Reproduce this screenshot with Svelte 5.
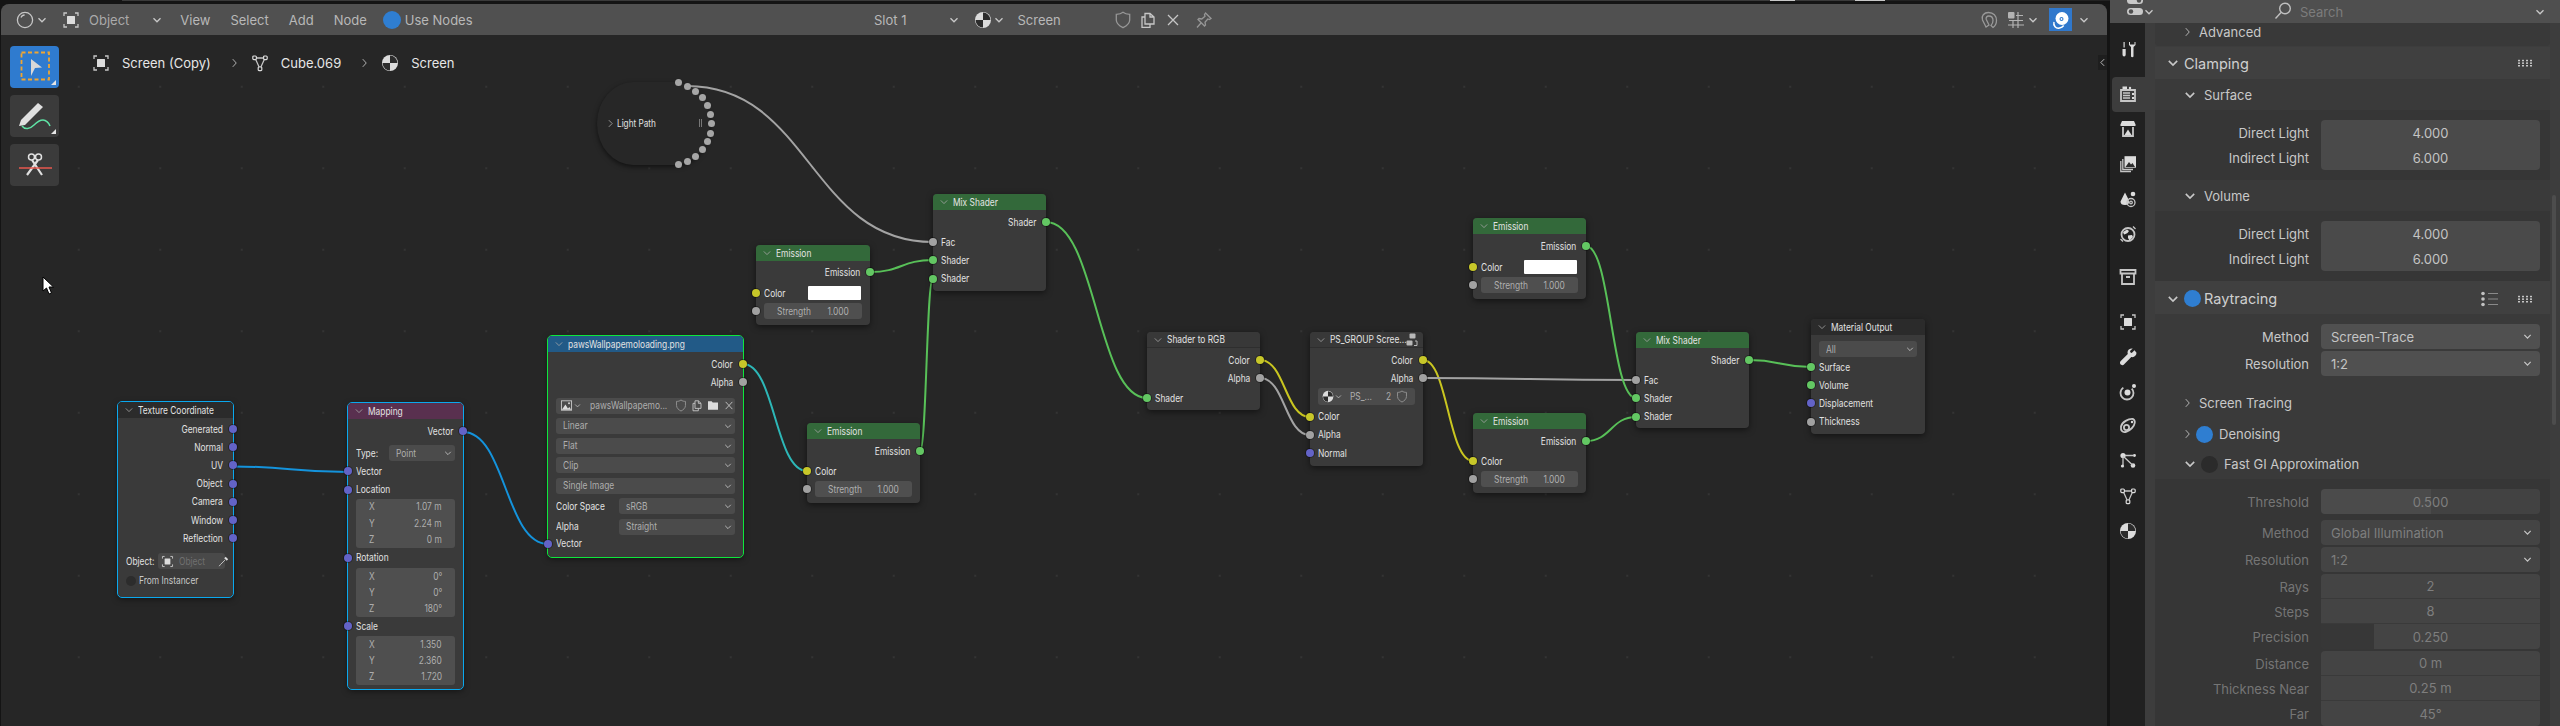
<script>
  const GRAY = '#a1a1a1', YEL = '#c7c729', GRN = '#63c763', PUR = '#6363c7';

  const emissionRows = (swatch, mt0, mt1) => [
    { t: 'out', label: 'Emission', s: GRN, mt: mt0 },
    { t: swatch ? 'swatch' : 'in', label: 'Color', s: YEL, mt: mt1 },
    { t: 'num', label: 'Strength', val: '1.000', s: GRAY }
  ];
  const mixRows = () => [
    { t: 'out', label: 'Shader', s: GRN, mt: 1 },
    { t: 'in', label: 'Fac', s: GRAY, mt: 2 },
    { t: 'in', label: 'Shader', s: GRN },
    { t: 'in', label: 'Shader', s: GRN }
  ];

  const nodes = [
    { title: 'Texture Coordinate', x: 118, y: 402, w: 115, h: 195, head: 'dark', sel: 'blue', rows: [
      { t: 'out', label: 'Generated', s: PUR }, { t: 'out', label: 'Normal', s: PUR }, { t: 'out', label: 'UV', s: PUR },
      { t: 'out', label: 'Object', s: PUR }, { t: 'out', label: 'Camera', s: PUR }, { t: 'out', label: 'Window', s: PUR },
      { t: 'out', label: 'Reflection', s: PUR },
      { t: 'object', mt: 5.500 }, { t: 'check', label: 'From Instancer', mt: 2.500 }
    ] },
    { title: 'Mapping', x: 348, y: 403, w: 115, h: 286, head: 'purple', sel: 'blue', rows: [
      { t: 'out', label: 'Vector', s: PUR, mt: 1 },
      { t: 'type', mt: 4 },
      { t: 'in', label: 'Vector', s: PUR }, { t: 'in', label: 'Location', s: PUR },
      { t: 'vec', vals: ['1.07 m', '2.24 m', '0 m'] },
      { t: 'in', label: 'Rotation', s: PUR, mt: 1 },
      { t: 'vec', vals: ['0°', '0°', '180°'], mt: 1 },
      { t: 'in', label: 'Scale', s: PUR },
      { t: 'vec', vals: ['1.350', '2.360', '1.720'], mt: 1 }
    ] },
    { title: 'pawsWallpapemoloading.png', x: 548, y: 336, w: 195, h: 221, head: 'blue', sel: 'green', rows: [
      { t: 'out', label: 'Color', s: YEL, mt: 1 }, { t: 'out', label: 'Alpha', s: GRAY },
      { t: 'image', mt: 6 },
      { t: 'sel', val: 'Linear', mt: 3.500 }, { t: 'sel', val: 'Flat', mt: 3.500 }, { t: 'sel', val: 'Clip', mt: 3 }, { t: 'sel', val: 'Single Image', mt: 4 },
      { t: 'sel', label: 'Color Space', val: 'sRGB', mt: 4 }, { t: 'sel', label: 'Alpha', val: 'Straight', mt: 4 },
      { t: 'in', label: 'Vector', s: PUR }
    ] },
    { title: 'Emission', x: 756, y: 245, w: 114, h: 80, head: 'green', rows: emissionRows(true, 0, 3) },
    { title: 'Emission', x: 807, y: 423, w: 113, h: 80, head: 'green', rows: emissionRows(false, 1, 2) },
    { title: 'Mix Shader', x: 933, y: 194, w: 113, h: 97, head: 'green', rows: mixRows() },
    { title: 'Shader to RGB', x: 1147, y: 332, w: 113, h: 78, head: 'gray', rows: [
      { t: 'out', label: 'Color', s: YEL, mt: 1 }, { t: 'out', label: 'Alpha', s: GRAY },
      { t: 'in', label: 'Shader', s: GRN, mt: 2 }
    ] },
    { title: 'PS_GROUP Scree...', x: 1310, y: 332, w: 113, h: 134, head: 'gray', group: true, rows: [
      { t: 'out', label: 'Color', s: YEL, mt: 1 }, { t: 'out', label: 'Alpha', s: GRAY },
      { t: 'group' },
      { t: 'in', label: 'Color', s: YEL, mt: 2 }, { t: 'in', label: 'Alpha', s: GRAY }, { t: 'in', label: 'Normal', s: PUR }
    ] },
    { title: 'Emission', x: 1473, y: 218, w: 113, h: 81, head: 'green', rows: emissionRows(true, 1, 3) },
    { title: 'Emission', x: 1473, y: 413, w: 113, h: 80, head: 'green', rows: emissionRows(false, 1, 2) },
    { title: 'Mix Shader', x: 1636, y: 332, w: 113, h: 96, head: 'green', rows: mixRows() },
    { title: 'Material Output', x: 1811, y: 319, w: 114, h: 115, head: 'dark', rows: [
      { t: 'sel', val: 'All', mt: 4 },
      { t: 'in', label: 'Surface', s: GRN, mt: 0.500 }, { t: 'in', label: 'Volume', s: GRN },
      { t: 'in', label: 'Displacement', s: PUR }, { t: 'in', label: 'Thickness', s: GRAY }
    ] }
  ];

  const BLUE = '#1493dc', TEAL = '#2db7b7', WG = '#58c058', WY = '#c9c620', WGR = '#a3a3a3';
  const wires = [
    [233, 466.500, 348, 472, BLUE], [463, 432, 548, 544, BLUE], [743, 364, 807, 471, TEAL],
    [920, 451, 933, 278, WG], [870, 272, 933, 260, WG], [687, 86, 933, 242, WGR],
    [1046, 222, 1147, 398, WG], [1260, 360, 1310, 417, WY], [1260, 378, 1310, 435, WGR],
    [1423, 360, 1473, 461, WY], [1423, 378, 1636, 380, WGR], [1586, 246, 1636, 398, WG],
    [1586, 441, 1636, 417, WG], [1749, 360, 1811, 367, WG]
  ];
  const wirePath = ([x1, y1, x2, y2]) => {
    const k = (x2 - x1) * 0.5;
    return `M${x1} ${y1}C${x1 + k} ${y1} ${x2 - k} ${y2} ${x2} ${y2}`;
  };

  // collapsed Light Path sockets, page coordinates
  const lightSockets = [
    [678, 82], [687, 86], [695, 91], [702, 97], [707, 105], [710, 114], [711, 123],
    [710, 133], [707, 141], [702, 149], [695, 156], [687, 161], [678, 164]
  ];

  const tabs = [
    { n: 'tool', mt: 0 }, { n: 'render', mt: 9, active: true }, { n: 'output', mt: 0 }, { n: 'viewlayer', mt: 0 },
    { n: 'scene', mt: 0 }, { n: 'world', mt: 1 }, { n: 'collection', mt: 8 }, { n: 'object', mt: 10 },
    { n: 'modifier', mt: 0 }, { n: 'particles', mt: 0 }, { n: 'physics', mt: 0 }, { n: 'constraint', mt: 0 },
    { n: 'mesh', mt: 0 }, { n: 'material', mt: 0 }
  ];
</script>

{#snippet chev(cls = '')}
  <svg class="chev {cls}" viewBox="0 0 10 10"><path d="M1.500 3.200 5 6.800 8.500 3.200" /></svg>
{/snippet}

{#snippet chevR()}
  <svg class="chevr" viewBox="0 0 10 14"><path d="M2.500 1.500 7.500 7 2.500 12.500" /></svg>
{/snippet}

{#snippet dots()}
  <svg class="dots" viewBox="0 0 16 8">
    {#each [0, 1, 2, 3] as i}
      {#each [0, 1, 2] as j}
        <rect x={1 + i * 4} y={0.800 + j * 2.600} width="2" height="1.500" />
      {/each}
    {/each}
  </svg>
{/snippet}

{#snippet ico(n)}
  <svg class="ico" viewBox="0 0 18 18" preserveAspectRatio="none">
    {#if n === 'object'}
      <path class="ln" d="M5 2H2v3M13 2h3v3M5 16H2v-3M13 16h3v-3" />
      <rect class="fl" x="5" y="5" width="8" height="8" rx="0.500" />
    {:else if n === 'mesh'}
      <path class="ln" d="M4 4h10L9 15Z" />
      <rect class="bx" x="1.800" y="2" width="3.600" height="3.600" rx="1" />
      <rect class="bx" x="12.600" y="2" width="3.600" height="3.600" rx="1" />
      <rect class="bx" x="7.200" y="13" width="3.600" height="3.600" rx="0.800" />
    {:else if n === 'material'}
      <circle class="fl" cx="9" cy="9" r="8" />
      <path class="cut" d="M9 9V1.600A7.400 7.400 0 0 1 16.400 9Z" />
      <path class="cut" d="M9 9H1.600A7.400 7.400 0 0 0 9 16.400Z" />
    {:else if n === 'nodeedit'}
      <circle class="ln" cx="9" cy="9" r="7.600" />
      <path class="ln" d="M5 6.500C5.600 5 7 4 8.600 4" />
    {:else if n === 'shield'}
      <path class="ln dim" d="M9 1.300C7 3 4.500 3.300 2.300 3.300V9C2.300 12.500 5.500 15 9 16.700 12.500 15 15.700 12.500 15.700 9V3.300C13.500 3.300 11 3 9 1.300Z" />
    {:else if n === 'copy'}
      <path class="ln" d="M6 2.500H11L15 6V13H6ZM11 2.500V6H15" />
      <path class="ln" d="M6 6H3V16.300H11V13" />
    {:else if n === 'x'}
      <path class="ln" d="M4 4 14 14M14 4 4 14" />
    {:else if n === 'pin'}
      <path class="ln dim" d="M10.500 2 16 7.500 14.500 8.500 12.800 8 10 11.200 10.500 14 9.500 15 3 8.500 4 7.500 6.800 8 10 5.200 9.500 3.500ZM6 12 2 16.500" />
    {:else if n === 'folder'}
      <path class="fl" d="M1.500 3H7l1.500 2H16.500V15H1.500Z" />
    {:else if n === 'imagef'}
      <rect class="ln" x="2" y="2.500" width="14" height="13" />
      <path class="fl" d="M2.500 15 7.500 7.500 11 13 13 11 15.500 15Z" />
      <circle class="fl" cx="12.500" cy="5.800" r="1.300" />
    {:else if n === 'picker'}
      <path class="fl" d="M12 2.500 15.500 6 13.500 8 10 4.500Z" />
      <path class="ln" d="M11 7 4.500 13.500 3 15.500" />
    {:else if n === 'tool'}
      <path class="fl" d="M3.500 8h3.200v5.500a1.600 2 0 0 1-3.200 0ZM4.500 1h1.200v5.500H4.500Z" />
      <path class="fl" d="M10 1v3l2 2v9.500a1.500 1.500 0 0 0 2.500 0V6l2-2V1l-1 0v2.500h-4.500V1Z" />
    {:else if n === 'render'}
      <path class="ln thick" d="M2 5H16V16H2Z" />
      <path class="fl" d="M3.500 1.500H8V4H3.500Z" />
      <circle class="fl" cx="11" cy="3" r="1.200" />
      <path class="ln" d="M4 8H11M4 10.500H11M4 13H11" />
      <rect class="fl" x="13" y="8" width="2" height="2" /><rect class="fl" x="13" y="12" width="2" height="2" />
    {:else if n === 'output'}
      <path class="fl" d="M3 1H15L16.500 4.500V6H1.500V4.500Z" />
      <path class="ln thick" d="M4 7V16H14V7" />
      <path class="fl" d="M5.500 15 9 9.500 12.500 15Z" />
    {:else if n === 'viewlayer'}
      <path class="ln" d="M1.800 6V16.500H12" />
      <path class="ln" d="M3.800 4V14.500H14" />
      <rect class="fl" x="5.500" y="1.200" width="11.500" height="11.500" />
      <path class="cut" d="M6.500 12 10 7 12 9.500 13.500 8 16 12Z" />
    {:else if n === 'scene'}
      <path class="fl" d="M6 2.500 1.500 11.500C1.500 14 3 15 6 15 9 15 10 14 10 12 10 9 7.500 6 6 2.500Z" />
      <circle class="fl" cx="14" cy="4" r="2.300" />
      <circle class="ln" cx="12" cy="12.500" r="4" />
      <circle class="ln" cx="12" cy="12.500" r="1.300" />
    {:else if n === 'world'}
      <circle class="ln thick" cx="9" cy="9.500" r="6.500" />
      <path class="fl" d="M4 7 8 4.500 10 6 8.500 8 6.500 9 5 9.500ZM9 10.500 13 10 14 12 10.500 15.500 9 13Z" />
      <path class="ln" d="M14 1.500 16.500 4M1.500 14 4 16.500" />
    {:else if n === 'collection'}
      <path class="ln thick" d="M1.500 2H16.500V5.500H1.500ZM3 5.500V16H15V5.500M7 9H11" />
    {:else if n === 'modifier'}
      <path class="fl" d="M15.500 2.200 12.700 5 11.500 4.500 11 3 13.700 .5C11 .2 8.500 1.800 8.500 4.500L8.800 6 1.500 13.200C.5 14.500 1 16 2.200 16.800 3.400 17.500 4.500 17 5.200 16.200L12.300 9C15 9.800 17.500 7.500 17.500 4.800Z" />
    {:else if n === 'particles'}
      <circle class="ln thick" cx="8" cy="10" r="6.500" stroke-dasharray="26 9" />
      <circle class="fl" cx="8.500" cy="9.500" r="3" />
      <circle class="fl" cx="15" cy="3" r="2" />
    {:else if n === 'physics'}
      <path class="ln thick" d="M2 9.500C3 5 9.500 1.500 14 2 17 3.500 16 8 13 11 10 14 5 16.500 3 14 2 13 1.800 11 2 9.500Z" />
      <circle class="ln thick" cx="7.500" cy="10.500" r="2.600" />
      <circle class="fl" cx="13" cy="5" r="1.200" />
    {:else if n === 'constraint'}
      <circle class="fl" cx="4" cy="3.500" r="2.600" />
      <circle class="fl" cx="14" cy="13.500" r="2.300" />
      <circle class="fl" cx="3.500" cy="14" r="1.600" />
      <circle class="fl" cx="15.500" cy="3.500" r="1.400" />
      <path class="ln" d="M4 4 14 13.500M4 5V13M6 3.500H15" />
    {/if}
  </svg>
{/snippet}

<div class="app">
  <div class="strip"></div>

  <div class="main">
    <section class="editor">
      <header class="hdr">
        <div class="hgroup left">
          <span class="i18">{@render ico('nodeedit')}</span>
          <span class="m3">{@render chev()}</span>
          <span class="i18 m15">{@render ico('object')}</span>
          <span class="hlabel m9">Object</span>
          <span class="m23">{@render chev()}</span>
          <span class="m18">View</span>
          <span class="m20">Select</span>
          <span class="m20">Add</span>
          <span class="m20">Node</span>
          <span class="toggle m16"></span>
          <span class="m4">Use Nodes</span>
        </div>
        <div class="hgroup mid">
          <span>Slot 1</span>
          <span class="m43">{@render chev()}</span>
          <span class="i18 m15">{@render ico('material')}</span>
          <span class="m2">{@render chev()}</span>
          <span class="m13">Screen</span>
          <span class="i18 m53">{@render ico('shield')}</span>
          <span class="i18 m7">{@render ico('copy')}</span>
          <span class="i18 m7">{@render ico('x')}</span>
          <span class="i18 m13">{@render ico('pin')}</span>
        </div>
        <div class="hgroup right">
          <svg class="magnet" viewBox="0 0 18 18"><path d="M6 16 2.500 9C1 5 4 1.500 8.500 1.500 13.500 1.500 16.500 5 16.500 9.500 16.500 12 15 15 13 16.500L11 14.500C12.500 13 13 11 13 9.500 13 6.500 11 5 8.800 5 7 5 5.500 6.500 6.300 8.500L9 14Z" /></svg>
          <svg class="snap m9" viewBox="0 0 18 18">
            <rect x="1" y="1" width="6.500" height="6.500" rx="1" />
            <path d="M11 1V17M16 9.500H2M6 9V17M1 14H17M16 4.500H9" />
          </svg>
          <span class="m3">{@render chev()}</span>
          <span class="overlay-btn m11">
            <svg viewBox="0 0 20 20">
              <circle cx="11" cy="8.500" r="6.500" fill="#fff" />
              <circle cx="10.500" cy="9" r="2" fill="#3078cc" />
              <circle cx="10.500" cy="9" r="0.900" fill="#fff" />
              <path d="M3 12C2 15.500 5 19 8.500 18 11 17.500 12 16.500 12.700 15.500" fill="none" stroke="#fff" stroke-width="1.500" />
            </svg>
          </span>
          <span class="m7">{@render chev()}</span>
        </div>
      </header>

      <div class="canvas">
        <div class="plane">
          <svg class="wires" width="2107" height="726">
            {#each wires as w}
              <path d={wirePath(w)} stroke={w[4]} />
            {/each}
          </svg>

          <div class="lightpath">
            <svg class="lp-chev" viewBox="0 0 6 10"><path d="M1 1 5 5 1 9" /></svg>
            <span class="lp-label">Light Path</span>
            <span class="lp-pause"></span>
          </div>
          {#each lightSockets as p}
            <span class="lp-sock" style="left:{p[0] - 3.500}px;top:{p[1] - 3.500}px"></span>
          {/each}

          {#each nodes as n}
            <div class="node {n.sel ? 'sel-' + n.sel : ''}" style="left:{n.x}px;top:{n.y}px;width:{n.w}px;height:{n.h}px">
              <div class="nhead {n.head}">
                <svg class="nchev" viewBox="0 0 10 10"><path d="M1 3 5 7 9 3" /></svg>
                <span class="nt tl">{n.title}</span>
                {#if n.group}
                  <svg class="groupico" viewBox="0 0 14 14">
                    <rect x="3.500" y="0.500" width="6" height="5" rx="1" />
                    <rect x="0.500" y="7.500" width="6" height="5" rx="1" />
                    <path class="gl" d="M9 8H11V12.500H8" />
                  </svg>
                {/if}
              </div>
              <div class="nbody">
                {#each n.rows as r}
                  <div class="row" style={r.mt ? `margin-top:${r.mt}px` : ''}>
                    {#if r.t === 'out'}
                      <div class="r-out"><span class="nt tr">{r.label}</span><i class="sock so" style="background:{r.s}"></i></div>
                    {:else if r.t === 'in'}
                      <div class="r-in"><i class="sock si" style="background:{r.s}"></i><span class="nt tl">{r.label}</span></div>
                    {:else if r.t === 'swatch'}
                      <div class="r-in between"><i class="sock si" style="background:{r.s}"></i><span class="nt tl">{r.label}</span><b class="swatch"></b></div>
                    {:else if r.t === 'num'}
                      <div class="r-in"><i class="sock si" style="background:{r.s}"></i>
                        <div class="fld numf"><span class="nt tl dimt">{r.label}</span><span class="nt tr dimt">{r.val}</span></div>
                      </div>
                    {:else if r.t === 'sel'}
                      <div class="r-in compact">
                        {#if r.label}<span class="nt tl sellabel">{r.label}</span>{/if}
                        <div class="fld self"><span class="nt tl dimt">{r.val}</span><svg class="nchev2" viewBox="0 0 10 10"><path d="M1.500 3.500 5 7 8.500 3.500" /></svg></div>
                      </div>
                    {:else if r.t === 'type'}
                      <div class="r-in"><span class="nt tl typelabel">Type:</span>
                        <div class="fld self"><span class="nt tl dimt">Point</span><svg class="nchev2" viewBox="0 0 10 10"><path d="M1.500 3.500 5 7 8.500 3.500" /></svg></div>
                      </div>
                    {:else if r.t === 'object'}
                      <div class="r-in compact"><span class="nt tl objlabel">Object:</span>
                        <div class="fld objf"><span class="i14">{@render ico('object')}</span><span class="nt tl faint">Object</span><span class="i14 push">{@render ico('picker')}</span></div>
                      </div>
                    {:else if r.t === 'check'}
                      <div class="r-in"><b class="check"></b><span class="nt tl cl">{r.label}</span></div>
                    {:else if r.t === 'image'}
                      <div class="r-in compact">
                        <div class="fld imgf">
                          <span class="i14">{@render ico('imagef')}</span>
                          <svg class="nchev2 tiny" viewBox="0 0 10 10"><path d="M1.500 3.500 5 7 8.500 3.500" /></svg>
                          <span class="nt tl dimt imgname">pawsWallpapemo...</span>
                          <span class="i12 dimi">{@render ico('shield')}</span>
                          <span class="i12 dimi">{@render ico('copy')}</span>
                          <span class="i12 dimi">{@render ico('folder')}</span>
                          <span class="i12 dimi">{@render ico('x')}</span>
                        </div>
                      </div>
                    {:else if r.t === 'group'}
                      <div class="r-in">
                        <div class="fld grpf">
                          <span class="i12">{@render ico('material')}</span>
                          <svg class="nchev2 tiny" viewBox="0 0 10 10"><path d="M1.500 3.500 5 7 8.500 3.500" /></svg>
                          <span class="nt tl dimt grpname">PS_...</span>
                          <span class="nt tl dimt">2</span>
                          <span class="i12 dimi push">{@render ico('shield')}</span>
                        </div>
                      </div>
                    {/if}
                  </div>
                  {#if r.t === 'vec'}
                    <div class="vec" style={r.mt ? `margin-top:${r.mt}px` : ''}>
                      {#each ['X', 'Y', 'Z'] as axis, i}
                        <div class="vrow"><span class="nt tl dimt">{axis}</span><span class="nt tr dimt">{r.vals[i]}</span></div>
                      {/each}
                    </div>
                  {/if}
                {/each}
              </div>
            </div>
          {/each}
        </div>

        <div class="tools">
          <div class="tool active">
            <svg viewBox="0 0 49 42" width="49" height="42">
              <rect x="11.500" y="6.500" width="27.500" height="27" class="dash" />
              <path d="M21 13 32 21.500 25 22 21 30Z" fill="#d8d8d8" />
            </svg>
            <i class="corner"></i>
          </div>
          <div class="tool">
            <svg viewBox="0 0 49 42" width="49" height="42">
              <path d="M28 8 33 12 15 30 9 31 11 25Z" fill="#e0e0e0" />
              <path d="M12 31C15 35 20 34 24 30 27 27 30 25 33 25 36 25 39 28 40 31" fill="none" stroke="#5fe3a5" stroke-width="1.500" />
            </svg>
            <i class="corner"></i>
          </div>
          <div class="tool">
            <svg viewBox="0 0 49 42" width="49" height="42">
              <circle cx="21.500" cy="13" r="3" class="sc" /><circle cx="28.500" cy="13" r="3" class="sc" />
              <path d="M28 16 17 31M22 16 32 31" stroke="#e0e0e0" stroke-width="2.200" fill="none" />
              <path d="M9 24H42" stroke="#e8584f" stroke-width="1.500" />
            </svg>
          </div>
        </div>

        <div class="crumbs">
          <span class="i18">{@render ico('object')}</span>
          <span class="m12">Screen (Copy)</span>
          <span class="m20">{@render chevR()}</span>
          <span class="i18 m13">{@render ico('mesh')}</span>
          <span class="m12">Cube.069</span>
          <span class="m20">{@render chevR()}</span>
          <span class="i18 m13">{@render ico('material')}</span>
          <span class="m12">Screen</span>
        </div>

        <svg class="cursor" viewBox="0 0 12 20" width="12" height="20">
          <path d="M1 1V15L4.500 12 7 18 9.500 17 7 11H11.500Z" fill="#fff" stroke="#000" stroke-width="1" />
        </svg>

        <div class="collapse"><svg viewBox="0 0 6 10"><path d="M5 1 1 5 5 9" /></svg></div>
      </div>
    </section>

    <aside class="props">
      <header class="phdr">
        <svg class="pref" viewBox="0 0 18 18">
          <rect x="1" y="-3" width="16" height="7" rx="3.500" />
          <circle cx="13" cy="0.500" r="2.200" class="hole" />
          <rect x="1" y="8" width="16" height="7" rx="3.500" />
          <circle cx="5" cy="11.500" r="2.200" class="hole" />
        </svg>
        {@render chev()}
        <svg class="search" viewBox="0 0 18 18"><circle cx="11" cy="6.500" r="5.300" /><path d="M7 10.500 1.500 16.500" /></svg>
        <span class="stext">Search</span>
        <span class="push">{@render chev()}</span>
      </header>

      <div class="pbody">
        <nav class="tabs">
          {#each tabs as t}
            <div class="tab" class:on={t.active} style={t.mt ? `margin-top:${t.mt}px` : ''}>
              <span class="i18 tabi">{@render ico(t.n)}</span>
            </div>
          {/each}
        </nav>

        <div class="content">
          <div class="sbhead adv">{@render chevR()}<span>Advanced</span></div>

          <div class="phead">{@render chev('big')}<span class="ptitle">Clamping</span><span class="push">{@render dots()}</span></div>

          <div class="sbhead">{@render chev('big')}<span>Surface</span></div>
          <div class="sbbody">
            <div class="pr"><label>Direct Light</label><div class="pf num top"><span>4.000</span></div></div>
            <div class="pr"><label>Indirect Light</label><div class="pf num bot"><span>6.000</span></div></div>
          </div>

          <div class="sbhead">{@render chev('big')}<span>Volume</span></div>
          <div class="sbbody">
            <div class="pr"><label>Direct Light</label><div class="pf num top"><span>4.000</span></div></div>
            <div class="pr"><label>Indirect Light</label><div class="pf num bot"><span>6.000</span></div></div>
          </div>

          <div class="phead gap2">{@render chev('big')}<span class="tg"></span><span class="ptitle">Raytracing</span>
            <span class="push presets">
              <svg viewBox="0 0 18 16" width="18" height="16"><circle cx="3" cy="2.500" r="1.800" /><circle cx="3" cy="8" r="1.800" /><circle cx="3" cy="13.500" r="1.800" /><path d="M8 2.500H18M8 8H18M8 13.500H18" /></svg>
            </span>
            {@render dots()}
          </div>

          <div class="rt">
            <div class="pr"><label>Method</label><div class="pf drop rnd"><span>Screen-Trace</span>{@render chev('drop')}</div></div>
            <div class="pr mt2"><label>Resolution</label><div class="pf drop rnd"><span>1:2</span>{@render chev('drop')}</div></div>
            <div class="subrow st">{@render chevR()}<span>Screen Tracing</span></div>
            <div class="subrow">{@render chevR()}<span class="tg small"></span><span>Denoising</span></div>
            <div class="subrow fg">{@render chev('big')}<span class="tg small off"></span><span>Fast GI Approximation</span></div>
          </div>

          <div class="fast">
            <div class="pr dis"><label>Threshold</label><div class="pf num rnd slider half"><span>0.500</span></div></div>
            <div class="pr dis mt6"><label>Method</label><div class="pf drop rnd"><span>Global Illumination</span>{@render chev('drop')}</div></div>
            <div class="pr dis mt2"><label>Resolution</label><div class="pf drop rnd"><span>1:2</span>{@render chev('drop')}</div></div>
            <div class="pr dis mt2"><label>Rays</label><div class="pf num top line"><span>2</span></div></div>
            <div class="pr dis"><label>Steps</label><div class="pf num mid line"><span>8</span></div></div>
            <div class="pr dis"><label>Precision</label><div class="pf num bot slider quarter"><span>0.250</span></div></div>
            <div class="pr dis mt2"><label>Distance</label><div class="pf num top line"><span>0 m</span></div></div>
            <div class="pr dis"><label>Thickness Near</label><div class="pf num mid line"><span>0.25 m</span></div></div>
            <div class="pr dis"><label>Far</label><div class="pf num bot"><span>45°</span></div></div>
          </div>
        </div>
        <div class="scrollbar"></div>
      </div>
    </aside>
  </div>
</div>

<style>
  :global(body) { margin: 0; background: #111; }
  .app { width: 2560px; height: 726px; overflow: hidden; font-family: Inter, "Liberation Sans", sans-serif; color: #c4c4c4; background: #141414; position: relative; }
  .strip { height: 4px; background: linear-gradient(90deg, #141414 122px, #3a3a3a 122px, #3a3a3a 1770px, #c8c8c8 1770px, #c8c8c8 1795px, #3a3a3a 1795px, #3a3a3a 1855px, #c8c8c8 1855px, #c8c8c8 1885px, #222 1885px) top left / 100% 1px no-repeat, #141414; }
  .main { display: flex; height: 722px; }

  .m2 { margin-left: 2px; } .m3 { margin-left: 3px; } .m4 { margin-left: 4px; } .m7 { margin-left: 7px; }
  .m9 { margin-left: 9px; } .m11 { margin-left: 11px; } .m12 { margin-left: 12px; } .m13 { margin-left: 13px; }
  .m15 { margin-left: 15px; } .m16 { margin-left: 16px; } .m18 { margin-left: 18px; } .m20 { margin-left: 20px; }
  .m23 { margin-left: 23px; } .m43 { margin-left: 43px; } .m53 { margin-left: 53px; }
  .mt2 { margin-top: 2px; } .mt6 { margin-top: 6px; }
  .push { margin-left: auto; }

  /* left editor */
  .editor { width: 2106px; margin-left: 1px; display: flex; flex-direction: column; border-radius: 8px 8px 0 0; overflow: hidden; background: #262626; }
  .hdr { height: 31px; background: #505050; display: flex; align-items: center; font-size: 13px; color: #b8b8b8; position: relative; flex: none; }
  .hgroup { display: flex; align-items: center; height: 100%; flex: none; }
  .hgroup.left { padding-left: 15px; width: 860px; box-sizing: border-box; }
  .hgroup.mid { width: 1000px; padding-left: 13px; box-sizing: border-box; }
  .hgroup.right { padding-left: 119px; }
  .i18 { display: inline-flex; width: 18px; height: 18px; flex: none; }
  .hlabel { color: #aaa; }
  .toggle { width: 18px; height: 18px; border-radius: 50%; background: #2f7ed1; flex: none; }
  .chev { width: 10px; height: 10px; flex: none; display: block; }
  .chev path { fill: none; stroke: #c8c8c8; stroke-width: 1.300; }
  .magnet { width: 18px; height: 18px; }
  .magnet path { fill: none; stroke: #999; stroke-width: 1.300; }
  .snap { width: 18px; height: 18px; }
  .snap rect { fill: #b3b3b3; }
  .snap path { stroke: #b3b3b3; stroke-width: 1.200; fill: none; }
  .overlay-btn { width: 23px; height: 23px; background: #3078cc; display: inline-flex; align-items: center; justify-content: center; }
  .overlay-btn svg { width: 20px; height: 20px; }

  .ico { display: block; width: 100%; height: 100%; overflow: visible; }
  .ico .ln { fill: none; stroke: #c6c6c6; stroke-width: 1.300; }
  .ico .thick { stroke-width: 1.800; }
  .ico .dim { stroke: #969696; }
  .ico .fl { fill: #dcdcdc; }
  .ico .bx { fill: #262626; stroke: #dcdcdc; stroke-width: 1.200; }
  .ico .cut { fill: #2c2c2c; }

  .canvas { flex: 1; position: relative; overflow: hidden; background-color: #262626; background-image: radial-gradient(circle, #343434 0.800px, transparent 1.200px); background-size: 81.500px 81.500px; background-position: 37px 11px; }
  .plane { position: absolute; left: -1px; top: -35px; width: 2107px; height: 726px; }
  .wires { position: absolute; left: 0; top: 0; }
  .wires path { fill: none; stroke-width: 2; }

  .lightpath { position: absolute; left: 597px; top: 82px; width: 113px; height: 83px; background: #272727; border-radius: 36px / 41.500px; box-shadow: 0 2px 5px rgba(0, 0, 0, .55); display: flex; align-items: center; padding-left: 11px; box-sizing: border-box; font-size: 10.500px; color: #e4e4e4; }
  .lp-chev { width: 5px; height: 9px; margin-right: 4px; }
  .lp-chev path { fill: none; stroke: #aaa; stroke-width: 1; }
  .lp-label { white-space: nowrap; display: inline-block; transform: scaleX(.78); transform-origin: left; }
  .lp-pause { position: absolute; left: 102px; top: 37px; width: 1px; height: 8px; border-left: 1.500px solid #777; border-right: 1.500px solid #777; }
  .lp-sock { position: absolute; width: 7px; height: 7px; border-radius: 50%; background: #a6a6a6; }

  .node { position: absolute; background: #3a3a3a; border-radius: 4px; box-shadow: 0 2px 6px rgba(0, 0, 0, .5); display: flex; flex-direction: column; font-size: 10.500px; color: #e2e2e2; }
  .sel-blue { outline: 1px solid #0aa8ee; }
  .sel-green { outline: 1px solid #0ee63c; }
  .nhead { height: 16px; flex: none; display: flex; align-items: center; border-radius: 4px 4px 0 0; padding-left: 7px; gap: 5px; position: relative; color: #e4e4e4; }
  .nhead.green { background: #33693a; }
  .nhead.blue { background: #225a87; }
  .nhead.purple { background: #59304f; }
  .nhead.dark { background: #2b2b2b; }
  .nhead.gray { background: #383838; border-bottom: 1px solid #2e2e2e; box-sizing: border-box; }
  .nchev { width: 8px; height: 8px; flex: none; }
  .nchev path { fill: none; stroke: #a8a8a8; stroke-width: 1; }
  .groupico { position: absolute; right: 3px; top: 1px; width: 14px; height: 14px; }
  .groupico rect { fill: #b8b8b8; }
  .groupico .gl { fill: none; stroke: #b8b8b8; stroke-width: 1; }
  .nbody { padding-top: 2px; display: flex; flex-direction: column; }
  .row { flex: none; }
  .row:empty { display: none; }
  .r-out, .r-in { height: 18.200px; position: relative; display: flex; align-items: center; padding: 0 8px; }
  .r-in.compact { height: 16.500px; }
  .r-out { justify-content: flex-end; padding-right: 10px; }
  .sock { position: absolute; top: 50%; width: 8px; height: 8px; margin-top: -4px; border-radius: 50%; box-sizing: content-box; box-shadow: 0 0 0 1px rgba(0, 0, 0, .35); z-index: 2; }
  .so { right: -4px; }
  .si { left: -4px; }
  .nt { display: inline-block; white-space: nowrap; transform: scaleX(.8); }
  .tl { transform-origin: left center; }
  .tr { transform-origin: right center; }
  .dimt { color: #aeaeae; }
  .faint { color: #707070; }
  .between { justify-content: space-between; }
  .swatch { position: absolute; right: 9px; top: 2px; width: 53px; height: 14px; background: #fff; border-radius: 1px; }
  .fld { background: #4b4b4b; border-radius: 3px; height: 16px; display: flex; align-items: center; box-sizing: border-box; flex: 1; min-width: 0; position: relative; }
  .numf { padding: 0 13px; background: #4f4f4f; justify-content: space-between; }
  .self { padding: 0 3px 0 7px; justify-content: space-between; }
  .nchev2 { width: 8px; height: 8px; flex: none; }
  .nchev2 path { fill: none; stroke: #c2c2c2; stroke-width: 1.100; }
  .nchev2.tiny { width: 7px; height: 7px; margin-left: 1px; }
  .sellabel { width: 63px; flex: none; }
  .typelabel { width: 33px; flex: none; }
  .objlabel { width: 32px; flex: none; }
  .objf { background: #494949; padding: 0 3px; gap: 5px; }
  .i14 { width: 13px; height: 13px; flex: none; display: inline-flex; }
  .i12 { width: 12px; height: 13px; flex: none; display: inline-flex; }
  .dimi { margin-left: 4px; }
  .check { width: 10px; height: 10px; border-radius: 50%; background: #2c2c2c; flex: none; margin-right: 3px; }
  .cl { color: #c8c8c8; }
  .imgf { padding: 0 4px; }
  .imgname { width: 81px; margin-left: 9px; }
  .grpf { padding: 0 4px; height: 17px; }
  .grpname { margin-left: 8px; width: 36px; }
  .vec { margin: 0 8px; background: #4f4f4f; border-radius: 3px; height: 49px; display: flex; flex-direction: column; }
  .vrow { height: 16.330px; display: flex; align-items: center; justify-content: space-between; padding: 0 13px; }

  .tools { position: absolute; left: 9px; top: 11px; display: flex; flex-direction: column; gap: 7px; }
  .tool { width: 49px; height: 42px; background: #3b3b3b; border-radius: 4px; position: relative; }
  .tool svg { display: block; }
  .tool.active { background: #2f7bcf; }
  .tool .dash { fill: none; stroke: #f0a632; stroke-width: 1.800; stroke-dasharray: 4 2.500; }
  .tool .sc { fill: none; stroke: #e0e0e0; stroke-width: 1.500; }
  .corner { position: absolute; right: 3px; bottom: 3px; width: 0; height: 0; border-left: 5px solid transparent; border-bottom: 5px solid #e6e6e6; }

  .crumbs { position: absolute; left: 91px; top: 18px; height: 20px; display: flex; align-items: center; font-size: 13px; color: #e6e6e6; }
  .chevr { width: 7px; height: 12px; display: block; flex: none; }
  .chevr path { fill: none; stroke: #c8c8c8; stroke-width: 1.200; }
  .cursor { position: absolute; left: 41px; top: 241px; }
  .collapse { position: absolute; right: 0; top: 20px; width: 9px; height: 15px; background: #1e1e1e; display: flex; align-items: center; justify-content: center; }
  .collapse svg { width: 5px; height: 9px; }
  .collapse path { fill: none; stroke: #b8b8b8; stroke-width: 1.200; }

  /* properties */
  .props { margin-left: 3px; width: 450px; margin-top: -4px; position: relative; background: #3d3d3d; display: flex; flex-direction: column; height: 726px; }
  .phdr { height: 23px; flex: none; background: #4f4f4f; display: flex; align-items: center; padding: 0 15px 0 16px; font-size: 13px; }
  .pref { width: 18px; height: 18px; flex: none; margin-top: -6px; }
  .pref rect { fill: #c8c8c8; }
  .pref .hole { fill: #4f4f4f; }
  .search { width: 18px; height: 18px; margin-left: 120px; flex: none; margin-top: -2px; }
  .search circle, .search path { fill: none; stroke: #c0c0c0; stroke-width: 1.400; }
  .stext { margin-left: 8px; color: #7c7c7c; font-size: 13px; }

  .pbody { flex: 1; display: flex; position: relative; min-height: 0; }
  .tabs { width: 35px; flex: none; background: #212121; padding-top: 10px; box-sizing: border-box; display: flex; flex-direction: column; }
  .tab { height: 34.800px; flex: none; display: flex; align-items: center; justify-content: center; border-radius: 4px 0 0 4px; margin-left: 2px; }
  .tab.on { background: #3d3d3d; }
  .tabi { margin-left: -2px; }
  .content { width: 395px; margin-left: 10px; font-size: 13px; color: #c8c8c8; min-width: 0; }
  .scrollbar { position: absolute; right: 4px; top: 172px; width: 4px; height: 230px; background: #4d4d4d; border-radius: 2px; }

  .sbhead { height: 31px; background: #3a3a3a; display: flex; align-items: center; padding-left: 29px; gap: 8px; box-sizing: border-box; }
  .sbhead.adv { height: 23px; padding-bottom: 5px; background: #393939; border-radius: 0 0 4px 4px; margin-bottom: 1px; }
  .phead { height: 32px; background: #404040; display: flex; align-items: center; padding: 0 17px 0 12px; gap: 5px; box-sizing: border-box; }
  .phead.gap2 { height: 33px; padding-top: 2px; }
  .ptitle { font-size: 14.500px; color: #cfcfcf; }
  .presets { margin-right: 14px; display: inline-flex; }
  .presets circle { fill: #c2c2c2; }
  .presets path { stroke: #8a8a8a; stroke-width: 1; }
  :global(.chev.big) { width: 12px; height: 12px; }
  :global(.chev.drop) { width: 9px; height: 9px; }
  .dots { width: 16px; height: 8px; display: block; }
  .dots rect { fill: #c6c6c6; }
  .sbbody { background: #363636; height: 70px; padding-top: 10px; box-sizing: border-box; }

  .pr { display: grid; grid-template-columns: 154px 219px; column-gap: 12px; align-items: center; }
  .pr label { text-align: right; white-space: nowrap; }
  .pf { height: 25px; background: #4a4a4a; display: flex; align-items: center; box-sizing: border-box; position: relative; color: #c4c4c4; }
  .pf span { position: relative; }
  .num { justify-content: center; }
  .top { border-radius: 4px 4px 0 0; }
  .mid { border-radius: 0; }
  .bot { border-radius: 0 0 4px 4px; }
  .rnd { border-radius: 4px; }
  .drop { justify-content: space-between; padding: 0 4px 0 10px; background: #505050; }

  .rt { background: #3a3a3a; height: 165px; box-sizing: border-box; padding-top: 10px; }
  .subrow { height: 31px; display: flex; align-items: center; padding-left: 29px; gap: 8px; }
  .subrow.st { margin-top: 11.500px; }
  .subrow.fg { height: 29px; }
  .tg { width: 17px; height: 17px; border-radius: 50%; background: #2f7ed1; flex: none; margin-right: -2px; }
  .tg.small { margin-left: -3px; }
  .tg.off { background: #2b2b2b; }

  .fast { background: #363636; padding-top: 10px; box-sizing: border-box; height: 250px; }
  .dis label { color: #757575; }
  .dis .pf { background: #444; color: #7e7e7e; }
  .dis .drop { background: #444; }
  .line { border-bottom: 1px solid #3a3a3a; }
  .dis .slider.half { background: linear-gradient(90deg, #4b4b4b 50%, #424242 50%); }
  .dis .slider.quarter { background: linear-gradient(90deg, #373737 24%, #444 24%); }
</style>
